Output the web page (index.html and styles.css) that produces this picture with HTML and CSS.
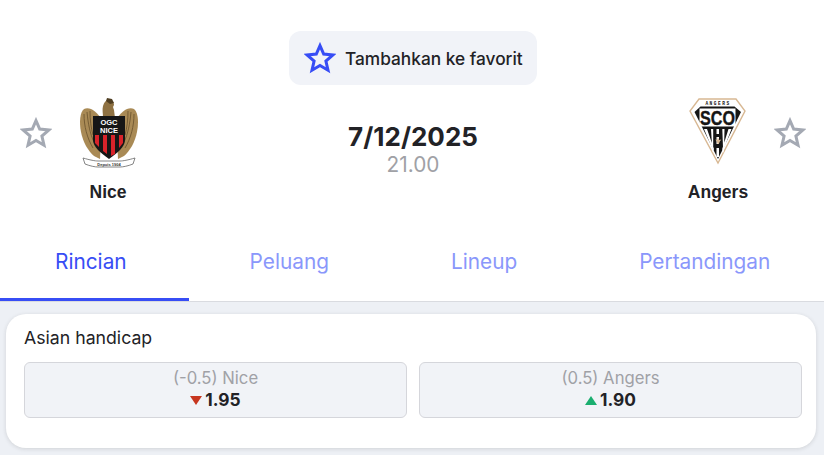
FILE: index.html
```html
<!DOCTYPE html>
<html lang="id">
<head>
<meta charset="utf-8">
<title>Nice vs Angers</title>
<link rel="stylesheet" href="styles.css">
</head>
<body>
<header class="match">
  <div class="fav-row">
    <button class="fav-btn">
      <svg class="fav-star" viewBox="0 0 32 32"><path d="M16 3.6l3.7 8.5 9.2.9-7 6.1 2.1 9.1-8-4.8-8 4.8 2.1-9.1-7-6.1 9.2-.9z" fill="none" stroke="#374df5" stroke-width="3" stroke-linejoin="miter"/></svg>
      <span>Tambahkan ke favorit</span>
    </button>
  </div>
  <div class="teams">
    <div class="side">
      <svg class="star" viewBox="0 0 32 32"><path d="M16 3.6l3.7 8.5 9.2.9-7 6.1 2.1 9.1-8-4.8-8 4.8 2.1-9.1-7-6.1 9.2-.9z" fill="none" stroke="#a4a9b3" stroke-width="3"/></svg>
      <div class="team">
        <svg class="logo" viewBox="0 0 60 76">
          <path d="M24 22C19 13 11 8 6 11 2 14 1 24 3 34c2 10 7 19 13 24l6 3z" fill="#a98a55"/>
          <path d="M38 22c5-9 13-14 18-11 4 3 5 13 3 23-2 10-7 19-13 24l-6 3z" fill="#a98a55"/>
          <path d="M6 16c0 12 3 24 9 34M9 14c1 11 3 22 7 30M12 13c0 9 1 17 3 24M56 16c0 12-3 24-9 34M53 14c-1 11-3 22-7 30M50 13c0 9-1 17-3 24" fill="none" stroke="#6f5730" stroke-width=".9"/>
          <path d="M25 20c0-5-1-8 0-12 1-4 3-6 6-6 3 0 5 2 5 5l-1 2 1 3 1 8z" fill="#8f7243"/>
          <path d="M28 3l1-3 5 1 2 4-4 1z" fill="#4f3e22"/>
          <path d="M15 18h32v24c0 7-8 13-16 19-8-6-16-12-16-19z" fill="#161616"/>
          <path d="M17 37h4v12l-4-4zM25 37h4v19l-4-3zM33 37h4v19l-4 2zM41 37h4v8l-4 5z" fill="#d8232a"/>
          <text class="ogc" x="31" y="27" text-anchor="middle">OGC</text>
          <text class="ogc" x="31" y="35" text-anchor="middle">NICE</text>
          <path d="M5 60c7 2 12 3 15 3h22c3 0 8-1 15-3l-2 6c-5 2-10 3-13 3H20c-3 0-8-1-13-3z" fill="#fff" stroke="#666" stroke-width=".8"/>
          <text class="since" x="31" y="67.500" text-anchor="middle">Depuis 1904</text>
        </svg>
        <span class="team-name">Nice</span>
      </div>
    </div>
    <div class="when">
      <div class="date">7/12/2025</div>
      <div class="time">21.00</div>
    </div>
    <div class="side">
      <div class="team">
        <svg class="logo" viewBox="0 0 60 76">
          <path d="M11 1h37l9 12-27 52L2 13z" fill="#fff" stroke="#d8b893" stroke-width="1.400"/>
          <path d="M12.500 8.500h34L53 14 30 61 6.500 14z" fill="#151515"/>
          <path d="M11.500 10.500h36v18h-36z" fill="#fff"/>
          <text class="angers" x="30" y="7" text-anchor="middle">ANGERS</text>
          <text class="sco" x="29.500" y="27" text-anchor="middle" textLength="35" lengthAdjust="spacingAndGlyphs">SCO</text>
          <path d="M16 31h3l7 20-.8 2zM23 31h2.200v24l-.8-2zM34.300 31h2.200L36 53l-.8 2zM40.500 31h3L35 53l-.8-2z" fill="#fff"/>
          <path d="M28.500 31h2.500v5h-2.500z" fill="#fff"/>
          <path d="M28.500 39h2.500v7h-2.500zM28.500 50h2.500v9h-2.500z" fill="#fff"/>
          <path d="M29.800 39.500l1.500 2.500 2-.5-1.500 2-1 2.500h-1l-1-2.500-1.500-2 2 .5z" fill="#d8b893"/>
        </svg>
        <span class="team-name">Angers</span>
      </div>
      <svg class="star" viewBox="0 0 32 32"><path d="M16 3.6l3.7 8.5 9.2.9-7 6.1 2.1 9.1-8-4.8-8 4.8 2.1-9.1-7-6.1 9.2-.9z" fill="none" stroke="#a4a9b3" stroke-width="3"/></svg>
    </div>
  </div>
  <nav class="tabs">
    <a class="tab active">Rincian</a>
    <a class="tab">Peluang</a>
    <a class="tab">Lineup</a>
    <a class="tab">Pertandingan</a>
  </nav>
</header>
<main class="content">
  <section class="card">
    <h2 class="card-title">Asian handicap</h2>
    <div class="odds">
      <div class="odd">
        <span class="odd-label">(-0.5) Nice</span>
        <span class="odd-value"><i class="arrow down"></i>1.95</span>
      </div>
      <div class="odd">
        <span class="odd-label">(0.5) Angers</span>
        <span class="odd-value"><i class="arrow up"></i>1.90</span>
      </div>
    </div>
  </section>
</main>
</body>
</html>
```

FILE: styles.css
```css
* { box-sizing: border-box; }
html, body { margin: 0; height: 100%; }
body {
  width: 824px;
  height: 455px;
  overflow: hidden;
  background: #edf0f5;
  font-family: Inter, "Noto Sans", sans-serif;
  color: #222226;
}
.match { background: #fff; height: 302px; border-bottom: 1px solid #d9dbe0; display: flex; flex-direction: column; }
.fav-row { display: flex; justify-content: center; padding: 31px 0 0 2px; }
.fav-btn {
  display: flex; align-items: center; gap: 9px;
  height: 54px; width: 248px; padding: 0 14px 0 15px;
  background: #f1f3f8; border: 0; border-radius: 12px;
  font: inherit; font-size: 17.300px; font-weight: 450; color: #222226; white-space: nowrap;
}
.fav-star { width: 32px; height: 32px; flex: none; }
.teams { display: flex; justify-content: space-between; align-items: flex-start; padding: 0 18px 0 20px; margin-top: 13px; }
.side { display: flex; align-items: flex-start; }
.star { width: 32px; height: 32px; flex: none; margin-top: 19px; }
.team { width: 60px; display: flex; flex-direction: column; align-items: center; }
.side:first-child .team { margin-left: 26px; }
.side:last-child .team { margin-right: 26px; }
.logo { width: 60px; height: 76px; display: block; }
.team-name { font-family: "Liberation Sans", Arial, sans-serif; font-weight: 700; font-size: 17.500px; line-height: 20px; margin-top: 8px; }
.when { text-align: center; margin-top: 23px; }
.date { font-size: 26px; font-weight: 700; line-height: 32px; }
.time { font-size: 20.800px; color: #a0a1a6; line-height: 24px; }
.ogc { font: 700 7.500px "Liberation Sans", sans-serif; fill: #fff; }
.since { font: 700 4px "Liberation Sans", sans-serif; fill: #333; }
.angers { font: 700 4.500px "Liberation Mono", monospace; letter-spacing: 1.500px; fill: #151515; }
.sco { font: 700 21px "Liberation Sans", sans-serif; fill: #151515; stroke: #151515; stroke-width: .4px; }
.tabs { display: flex; margin-top: auto; height: 70px; }
.tab { display: flex; align-items: center; padding: 0 61px 6px; font-size: 20.800px; color: #8a97fb; white-space: nowrap; border-bottom: 3px solid transparent; }
.tab:first-child { padding: 0 62px 6px 55px; }
.tab.active { color: #374df5; border-bottom-color: #374df5; }
.content { padding: 12px 8px 0 6px; }
.card { background: #fff; height: 134px; border-radius: 20px; box-shadow: 0 1px 4px rgba(34,34,38,.14); padding: 14px 14px 0 18px; }
.card-title { margin: 0; font-size: 17.700px; font-weight: 400; line-height: 20px; }
.odds { display: flex; gap: 12px; margin-top: 14px; }
.odd { flex: 1; height: 56px; background: #f1f3f7; border: 1px solid #d5d6db; border-radius: 6px; display: flex; flex-direction: column; align-items: center; padding-top: 5px; }
.odd-label { color: #a0a1a6; font-size: 16.700px; line-height: 21px; }
.odd-value { font-size: 17.300px; font-weight: 700; line-height: 22px; display: flex; align-items: center; gap: 3px; }
.arrow { width: 0; height: 0; border-left: 6px solid transparent; border-right: 6px solid transparent; }
.arrow.down { border-top: 9px solid #c7361f; }
.arrow.up { border-bottom: 9px solid #1aae6f; }
```
